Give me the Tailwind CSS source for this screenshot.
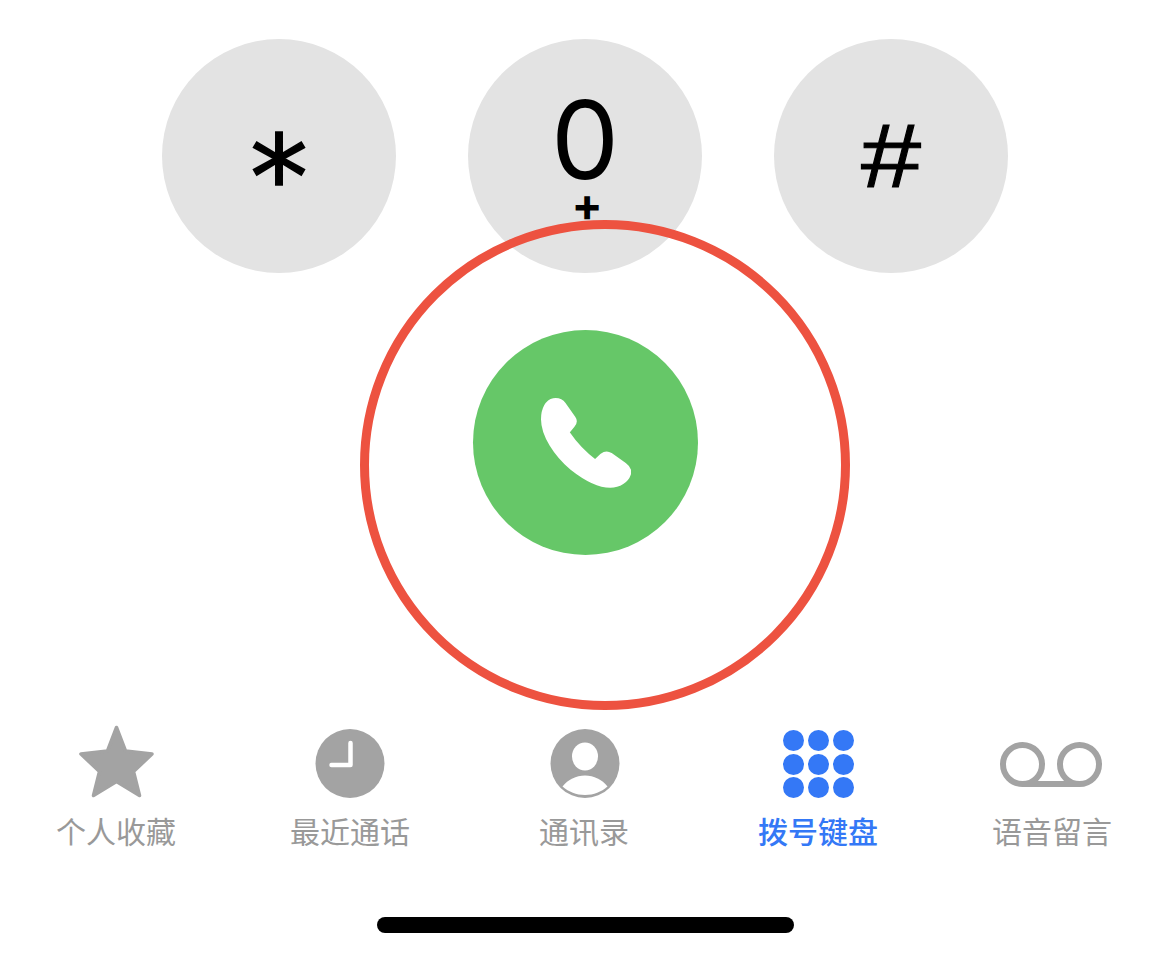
<!DOCTYPE html>
<html lang="zh-CN">
<head>
<meta charset="utf-8" />
<title>拨号键盘</title>
<script src="https://cdn.jsdelivr.net/npm/@tailwindcss/browser@4"></script>
</head>
<body class="relative w-[1170px] h-[957px] overflow-hidden bg-white font-['Inter','Noto_Sans_CJK_SC',sans-serif]">
  <!-- keypad, last row -->
  <div class="flex justify-center gap-[72px] pt-[39px]">
    <div class="w-[234px] h-[234px] rounded-full bg-[#e3e3e3] flex items-center justify-center">
      <span class="font-['DejaVu_Sans',sans-serif] text-[116px] leading-none text-black translate-y-[22px] [-webkit-text-stroke:1.5px_black]">*</span>
    </div>
    <div class="w-[234px] h-[234px] rounded-full bg-[#e3e3e3] flex flex-col items-center text-black">
      <span class="text-[108px] leading-[82px] font-normal mt-[60px]">0</span>
      <span class="text-[46px] leading-[26px] font-bold mt-[10px] ml-[4px]">+</span>
    </div>
    <div class="w-[234px] h-[234px] rounded-full bg-[#e3e3e3] flex items-center justify-center">
      <span class="font-['Liberation_Sans',sans-serif] text-[90px] leading-none text-black scale-x-[1.2] [-webkit-text-stroke:1px_black]">#</span>
    </div>
  </div>

  <!-- call button -->
  <div class="w-[225px] h-[225px] mt-[57px] ml-[473px] rounded-full bg-[#66c768] flex items-center justify-center">
    <svg class="w-[90px] h-[90px]" viewBox="123 85 269 268" fill="#fff" stroke="#fff" stroke-width="8" stroke-linejoin="round">
      <path d="M160 89C175 87 186 92 193 102L222 143C229 153 227 160 220 168L204 187C228 222 255 250 285 272L304 254C313 247 322 246 332 252L374 282C386 291 392 302 387 314C381 332 358 349 330 349C300 349 262 334 214 296C165 254 127 196 127 148C127 118 140 92 160 89Z"/>
    </svg>
  </div>

  <!-- tab bar -->
  <nav class="grid grid-cols-5 w-[1170px] mt-[170px] ml-[-1px] text-[30px] leading-[30px] text-[#999999]">
    <div class="flex flex-col items-center">
      <svg class="w-[77px] h-[73px] mb-[19px]" viewBox="0 0 77 73" fill="#a3a3a3" stroke="#a3a3a3" stroke-width="3.500" stroke-linejoin="round">
        <polygon points="38.500,2.500 47.500,26 74,29 55.500,46.500 61.500,70.500 38.500,56.500 15.500,70.500 21.500,46.500 3,29 29.500,26"/>
      </svg>
      <span>个人收藏</span>
    </div>
    <div class="flex flex-col items-center">
      <svg class="w-[70px] h-[73px] mb-[19px]" viewBox="0 0 70 73">
        <circle cx="35" cy="38.500" r="34.500" fill="#a3a3a3"/>
        <path d="M35.500 18V40H16.500" fill="none" stroke="#fff" stroke-width="4.500" stroke-linecap="round" stroke-linejoin="round"/>
      </svg>
      <span>最近通话</span>
    </div>
    <div class="flex flex-col items-center">
      <svg class="w-[70px] h-[73px] mb-[19px] ml-[2px]" viewBox="0 0 70 73">
        <circle cx="35" cy="38.500" r="34.500" fill="#a3a3a3"/>
        <ellipse cx="35" cy="31.500" rx="13" ry="14" fill="#fff"/>
        <path d="M12.500 61.500C18 54.500 26 50.500 35 50.500C44 50.500 52 54.500 57.500 61.500C51 67 44 70 35 70C26 70 19 67 12.500 61.500Z" fill="#fff"/>
      </svg>
      <span>通讯录</span>
    </div>
    <div class="flex flex-col items-center text-[#3478f6] font-medium">
      <div class="w-[71px] h-[73px] mb-[19px] pt-[5px] grid grid-cols-3 grid-rows-3 gap-x-[4px] gap-y-[3px] content-start">
        <span class="h-[21px] rounded-full bg-[#3478f6]"></span>
        <span class="h-[21px] rounded-full bg-[#3478f6]"></span>
        <span class="h-[21px] rounded-full bg-[#3478f6]"></span>
        <span class="h-[21px] rounded-full bg-[#3478f6]"></span>
        <span class="h-[21px] rounded-full bg-[#3478f6]"></span>
        <span class="h-[21px] rounded-full bg-[#3478f6]"></span>
        <span class="h-[21px] rounded-full bg-[#3478f6]"></span>
        <span class="h-[21px] rounded-full bg-[#3478f6]"></span>
        <span class="h-[21px] rounded-full bg-[#3478f6]"></span>
      </div>
      <span>拨号键盘</span>
    </div>
    <div class="flex flex-col items-center">
      <svg class="w-[102px] h-[73px] mb-[19px] ml-[-2px]" viewBox="0 0 102 73" fill="none" stroke="#a3a3a3" stroke-width="6">
        <circle cx="22.500" cy="39.500" r="19.500"/>
        <circle cx="79.500" cy="39.500" r="19.500"/>
        <path d="M22.500 59H79.500"/>
      </svg>
      <span>语音留言</span>
    </div>
  </nav>

  <!-- home indicator -->
  <div class="w-[417px] h-[16px] mt-[70px] ml-[377px] rounded-full bg-black"></div>

  <!-- annotation ring over the call button -->
  <div class="absolute left-[360px] top-[220px] w-[490px] h-[490px] rounded-full border-[9px] border-[#ed5240]"></div>
</body>
</html>
